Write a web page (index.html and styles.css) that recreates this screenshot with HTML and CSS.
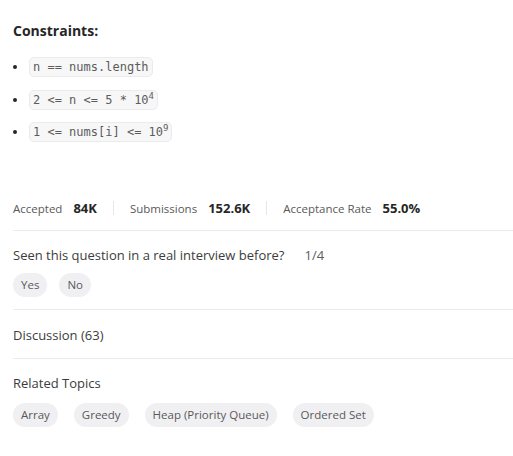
FILE: index.html
```html
<!DOCTYPE html>
<html>
<head>
<meta charset="utf-8">
<link rel="stylesheet" href="styles.css">
</head>
<body>
<div class="page">
  <section class="constraints">
    <h3 class="title">Constraints:</h3>
    <ul class="list">
      <li><code>n == nums.length</code></li>
      <li><code>2 &lt;= n &lt;= 5 * 10<sup>4</sup></code></li>
      <li><code>1 &lt;= nums[i] &lt;= 10<sup>9</sup></code></li>
    </ul>
  </section>
  <div class="stats">
    <div class="stat"><span class="label">Accepted</span><span class="value">84K</span></div>
    <div class="sep"></div>
    <div class="stat"><span class="label">Submissions</span><span class="value">152.6K</span></div>
    <div class="sep"></div>
    <div class="stat"><span class="label">Acceptance Rate</span><span class="value">55.0%</span></div>
  </div>
  <div class="block interview">
    <div class="row"><span>Seen this question in a real interview before?</span><span class="count">1/4</span></div>
    <div class="pills">
      <span class="pill">Yes</span>
      <span class="pill">No</span>
    </div>
  </div>
  <div class="block discussion">Discussion (63)</div>
  <div class="block topics">
    <div class="row">Related Topics</div>
    <div class="chips">
      <span class="chip">Array</span>
      <span class="chip">Greedy</span>
      <span class="chip">Heap (Priority Queue)</span>
      <span class="chip">Ordered Set</span>
    </div>
  </div>
</div>
</body>
</html>
```
FILE: styles.css
```css
html, body { margin: 0; padding: 0; background: #fff; }
body { font-family: "Open Sans", "Noto Sans", sans-serif; color: #262626; }
.page { padding: 21px 0 0 13px; }
.title { margin: 0; font-size: 14px; font-weight: 700; line-height: 20px; color: #262626; }
.list { margin: 16px 0 0 0; padding: 0 0 0 16px; list-style: none; }
.list li { position: relative; height: 20px; margin-bottom: 12.5px; display: flex; }
.list li::before { content: ""; position: absolute; left: -16px; top: 8px; width: 4px; height: 4px; border-radius: 50%; background: #262626; }
code {
  font-family: "DejaVu Sans Mono", monospace; font-size: 12px; line-height: 18px;
  color: #5c5c5c; background: #f7f7f8; border: 1px solid #ebebeb; border-radius: 5px;
  padding: 0 3px; white-space: pre;
}
sup { font-size: 9px; line-height: 0; vertical-align: 5px; }
.stats { display: flex; align-items: center; margin-top: 54px; height: 24px; }
.stat { display: flex; align-items: baseline; gap: 11px; }
.label { font-size: 11.5px; color: #595959; }
.value { font-size: 13px; font-weight: 700; color: #262626; }
.sep { width: 1px; height: 14px; background: #e6e6e6; margin: 0 16px; }
.block { border-top: 1px solid #ececec; }
.interview { margin-top: 10px; padding-top: 14px; padding-bottom: 12px; }
.row { font-size: 13px; line-height: 20px; color: #3c3c3c; }
.count { margin-left: 20px; color: #5c5c5c; }
.pills { display: flex; gap: 12px; margin-top: 8px; }
.pill { font-size: 11.5px; line-height: 24px; padding: 0 8px; border-radius: 12px; background: #f0f0f2; color: #595959; }
.discussion { padding: 15px 0 13px; font-size: 13px; line-height: 20px; color: #3c3c3c; }
.topics { padding-top: 14px; }
.chips { display: flex; gap: 16px; margin-top: 10px; }
.chip { font-size: 11.5px; line-height: 24px; padding: 0 8px; border-radius: 12px; background: #f0f0f2; color: #595959; }
```
